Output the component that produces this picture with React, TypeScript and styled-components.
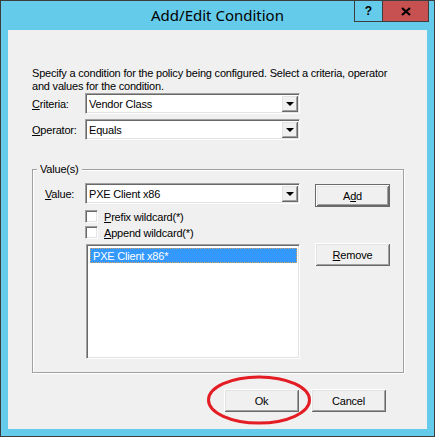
import styled, { createGlobalStyle, css } from "styled-components";

const GlobalStyle = createGlobalStyle`
    html, body {
        margin: 0;
        padding: 0;
        overflow: hidden;
        background: #ffffff;
    }
`;

const Window = styled.div`
    width: 435px;
    height: 437px;
    box-sizing: border-box;
    border: 1px solid #3d3d3d;
    background: #65cbea;
    display: flex;
    flex-direction: column;
`;

const TitleBar = styled.div`
    height: 29px;
    display: grid;
    grid-template-columns: 1fr auto 1fr;
    align-items: start;
`;

const Title = styled.div`
    grid-column: 2;
    font-family: "Noto Sans", "Open Sans", sans-serif;
    font-size: 15px;
    line-height: 29px;
    color: #000;
    white-space: nowrap;
`;

const CaptionButtons = styled.div`
    grid-column: 3;
    justify-self: end;
    margin-right: 5px;
    display: flex;
    border: 1px solid #3d3d3d;
    border-top: none;
`;

const CaptionButton = styled.div<{ $close?: boolean }>`
    height: 20px;
    width: ${(p) => (p.$close ? "45px" : "27px")};
    display: flex;
    align-items: center;
    justify-content: center;
    background: ${(p) => (p.$close ? "#c75050" : "transparent")};
    border-left: ${(p) => (p.$close ? "1px solid #3d3d3d" : "none")};
    font-family: "Liberation Sans", Arial, sans-serif;
    font-weight: 700;
    font-size: 12px;
    color: #000;
`;

const Client = styled.div`
    flex: 1;
    margin: 0 7px 7px;
    background: #f0f0f0;
    padding: 37px 31px 0 24px;
    display: flex;
    flex-direction: column;
    font-family: "Liberation Sans", Arial, sans-serif;
    font-size: 11px;
    letter-spacing: -0.2px;
    color: #000;
`;

const Description = styled.div`
    line-height: 13px;
    white-space: nowrap;
`;

const FieldRow = styled.div<{ $gap?: number }>`
    display: grid;
    grid-template-columns: 53px 215px;
    align-items: center;
    margin-top: ${(p) => p.$gap ?? 0}px;
`;

const Label = styled.span`
    padding-top: 1px;
`;

const Key = styled.span`
    text-decoration: underline;
    text-underline-offset: 1px;
`;

const sunken = css`
    box-sizing: border-box;
    background: #ffffff;
    border: 1px solid;
    border-color: #a0a0a0 #ffffff #ffffff #a0a0a0;
    box-shadow: inset 1px 1px 0 #696969, inset -1px -1px 0 #e3e3e3;
`;

const raised = css`
    box-shadow: inset 1px 1px 0 #ffffff, inset -1px -1px 0 #696969,
        inset 2px 2px 0 #e3e3e3, inset -2px -2px 0 #a0a0a0;
`;

const Combo = styled.div<{ $area?: string }>`
    ${sunken};
    grid-area: ${(p) => p.$area ?? "auto"};
    width: 215px;
    height: 21px;
    padding: 1px;
    display: flex;
`;

const ComboText = styled.div`
    flex: 1;
    padding-left: 2px;
    display: flex;
    align-items: center;
`;

const DropButton = styled.div`
    width: 17px;
    background: #f0f0f0;
    ${raised};
    display: flex;
    align-items: center;
    justify-content: center;

    &::after {
        content: "";
        border-left: 4px solid transparent;
        border-right: 4px solid transparent;
        border-top: 4px solid #000;
        margin-top: 1px;
    }
`;

const Group = styled.div`
    position: relative;
    box-sizing: border-box;
    width: 372px;
    margin-top: 29px;
    padding: 13px 13px 13px 12px;
    border: 1px solid #a0a0a0;
    box-shadow: 1px 1px 0 #ffffff, inset 1px 1px 0 #ffffff;
    display: grid;
    grid-template-columns: 40px 215px 90px;
    grid-template-areas:
        "label combo add"
        ". prefix ."
        ". append ."
        ". list remove";
    align-items: start;
`;

const Legend = styled.span`
    position: absolute;
    top: -7px;
    left: 4px;
    padding: 0 3px;
    line-height: 13px;
    background: #f0f0f0;
`;

const GroupLabel = styled.span`
    grid-area: label;
    align-self: center;
    margin-top: -2px;
`;

const PushButton = styled.button<{ $area?: string; $default?: boolean; $offset?: number }>`
    grid-area: ${(p) => p.$area ?? "auto"};
    justify-self: end;
    width: 75px;
    height: 23px;
    box-sizing: border-box;
    margin: ${(p) => p.$offset ?? 0}px 0 0;
    padding: 0;
    border: ${(p) => (p.$default ? "1px solid #6a6a6a" : "none")};
    background: #f0f0f0;
    ${raised};
    font-family: "Liberation Sans", Arial, sans-serif;
    font-size: 11px;
    letter-spacing: -0.2px;
    color: #000;
`;

const CheckRow = styled.label<{ $area: string }>`
    grid-area: ${(p) => p.$area};
    margin-top: 3px;
    height: 13px;
    display: flex;
    align-items: center;
    gap: 6px;
`;

const CheckBox = styled.span`
    ${sunken};
    width: 13px;
    height: 13px;
`;

const ListBox = styled.div`
    ${sunken};
    grid-area: list;
    margin: 5px 0 0 1px;
    width: 214px;
    height: 115px;
    padding: 3px 2px 2px 3px;
`;

const ListItem = styled.div<{ $selected?: boolean }>`
    height: 15px;
    box-sizing: border-box;
    padding-left: 2px;
    line-height: 14px;
    background: ${(p) => (p.$selected ? "#3399ff" : "transparent")};
    color: ${(p) => (p.$selected ? "#ffffff" : "#000")};
    border: 1px dotted ${(p) => (p.$selected ? "#d9a066" : "transparent")};
`;

const Footer = styled.div`
    margin-top: 16px;
    padding-right: 10px;
    display: flex;
    justify-content: flex-end;
    gap: 12px;
`;

const Marked = styled.span`
    position: relative;
    display: flex;
`;

const Circle = styled.svg`
    position: absolute;
    left: -17px;
    top: -14px;
    pointer-events: none;
`;

export default function App() {
    return (
        <>
            <GlobalStyle />
            <Window>
                <TitleBar>
                    <Title>Add/Edit Condition</Title>
                    <CaptionButtons>
                        <CaptionButton>?</CaptionButton>
                        <CaptionButton $close>
                            <svg width="10" height="9" viewBox="0 0 10 9">
                                <path d="M1 1 L9 8 M9 1 L1 8" stroke="#000" strokeWidth="2.2" />
                            </svg>
                        </CaptionButton>
                    </CaptionButtons>
                </TitleBar>
                <Client>
                    <Description>
                        Specify a condition for the policy being configured. Select a criteria, operator
                        <br />
                        and values for the condition.
                    </Description>
                    <FieldRow>
                        <Label>
                            <Key>C</Key>riteria:
                        </Label>
                        <Combo>
                            <ComboText>Vendor Class</ComboText>
                            <DropButton />
                        </Combo>
                    </FieldRow>
                    <FieldRow $gap={5}>
                        <Label>
                            <Key>O</Key>perator:
                        </Label>
                        <Combo>
                            <ComboText>Equals</ComboText>
                            <DropButton />
                        </Combo>
                    </FieldRow>
                    <Group>
                        <Legend>Value(s)</Legend>
                        <GroupLabel>
                            <Key>V</Key>alue:
                        </GroupLabel>
                        <Combo $area="combo">
                            <ComboText>PXE Client x86</ComboText>
                            <DropButton />
                        </Combo>
                        <PushButton $area="add" $default $offset={1}>
                            A<Key>d</Key>d
                        </PushButton>
                        <CheckRow $area="prefix">
                            <CheckBox />
                            <span>
                                <Key>P</Key>refix wildcard(*)
                            </span>
                        </CheckRow>
                        <CheckRow $area="append">
                            <CheckBox />
                            <span>
                                <Key>A</Key>ppend wildcard(*)
                            </span>
                        </CheckRow>
                        <ListBox>
                            <ListItem $selected>PXE Client x86*</ListItem>
                        </ListBox>
                        <PushButton $area="remove" $offset={4}>
                            <Key>R</Key>emove
                        </PushButton>
                    </Group>
                    <Footer>
                        <Marked>
                            <PushButton>Ok</PushButton>
                            <Circle width="104" height="50" viewBox="0 0 104 50">
                                <ellipse cx="52" cy="25" rx="50.5" ry="23" fill="none" stroke="#e41c24" strokeWidth="3" />
                            </Circle>
                        </Marked>
                        <PushButton>Cancel</PushButton>
                    </Footer>
                </Client>
            </Window>
        </>
    );
}
